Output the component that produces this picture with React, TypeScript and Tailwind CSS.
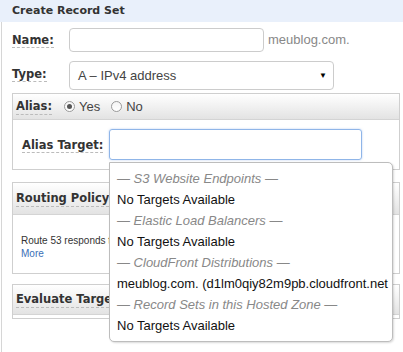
import { useState } from "react";

const labelCls =
  "font-['DejaVu_Sans',sans-serif] font-bold text-[11.5px] text-[#333] border-b border-dashed border-[#bbb] leading-[15px]";

function Panel({ title, children, headerH }: { title: React.ReactNode; children?: React.ReactNode; headerH: string }) {
  return (
    <div className="border border-[#cfcfcf]">
      <div className={`flex items-center gap-2 px-[3px] bg-gradient-to-b from-white to-[#e3e3e3] border-b border-[#d4d4d4] ${headerH}`}>
        {title}
      </div>
      {children}
    </div>
  );
}

const targets = [
  { group: true, text: "— S3 Website Endpoints —" },
  { group: false, text: "No Targets Available" },
  { group: true, text: "— Elastic Load Balancers —" },
  { group: false, text: "No Targets Available" },
  { group: true, text: "— CloudFront Distributions —" },
  { group: false, text: "meublog.com. (d1lm0qiy82m9pb.cloudfront.net" },
  { group: true, text: "— Record Sets in this Hosted Zone —" },
  { group: false, text: "No Targets Available" },
];

export default function App() {
  const [alias, setAlias] = useState("yes");

  return (
    <div className="relative w-[403px] h-[352px] overflow-hidden bg-white font-['Liberation_Sans',Arial,sans-serif] text-[13px] text-[#222]">
      {/* Header */}
      <div className="h-[22px] bg-[#e9f0fb] flex items-center pl-[12px]">
        <span className="font-['DejaVu_Sans',sans-serif] font-bold text-[11px] text-[#333]">Create Record Set</span>
      </div>

      <div className="h-[330px] ml-[1px] border-l border-[#d6d6d6] pl-[10px] pr-[3px] pt-[6px]">
        {/* Name */}
        <div className="flex items-center h-[24px]">
          <div className="w-[57px]">
            <span className={labelCls}>Name:</span>
          </div>
          <div className="w-[195px] h-[24px] border border-[#ccc] rounded-[4px]" />
          <span className="ml-[4px] text-[#888] text-[13px]">meublog.com.</span>
        </div>

        {/* Type */}
        <div className="flex items-center h-[29px] mt-[9px]">
          <div className="w-[57px] -mt-[4px]">
            <span className={labelCls}>Type:</span>
          </div>
          <div className="w-[265px] h-[29px] border border-[#ccc] rounded-[4px] flex items-center pl-[8px] pr-[6px]">
            <span className="flex-1 text-[#444]">A – IPv4 address</span>
            <span className="text-[8px] text-black">▼</span>
          </div>
        </div>

        {/* Alias panel */}
        <div className="mt-[3px]">
          <Panel
            headerH="h-[26px]"
            title={
              <div className="flex items-center">
                <span className={labelCls}>Alias:</span>
                <label className="flex items-center ml-[12px] cursor-pointer" onClick={() => setAlias("yes")}>
                  <span className="w-[11px] h-[11px] rounded-full border border-[#9a9a9a] bg-gradient-to-b from-[#f4f4f4] to-white flex items-center justify-center">
                    {alias === "yes" && <span className="w-[5px] h-[5px] rounded-full bg-[#555]" />}
                  </span>
                  <span className="ml-[4px] text-[13px] text-[#444]">Yes</span>
                </label>
                <label className="flex items-center ml-[11px] cursor-pointer" onClick={() => setAlias("no")}>
                  <span className="w-[11px] h-[11px] rounded-full border border-[#9a9a9a] bg-gradient-to-b from-[#f4f4f4] to-white flex items-center justify-center">
                    {alias === "no" && <span className="w-[5px] h-[5px] rounded-full bg-[#555]" />}
                  </span>
                  <span className="ml-[4px] text-[13px] text-[#444]">No</span>
                </label>
              </div>
            }
          >
            <div className="flex items-center h-[49px] pl-[9px]">
              <div className="w-[87px]">
                <span className={labelCls}>Alias Target:</span>
              </div>
              <div className="w-[253px] h-[31px] border border-[#8fb5e8] rounded-[3px] shadow-[0_0_2px_rgba(100,150,230,0.5)]" />
            </div>
          </Panel>
        </div>

        {/* Routing policy */}
        <div className="mt-[12px]">
          <Panel headerH="h-[32px]" title={<span className={labelCls}>Routing Policy:</span>}>
            <div className="h-[58px] pl-[8px] pt-[19px] text-[10px] leading-[13px] text-[#333]">
              <div>Route 53 responds to queries based on the routing policy</div>
              <div className="text-[#3a6fb7]">More</div>
            </div>
          </Panel>
        </div>

        {/* Evaluate target health */}
        <div className="mt-[10px]">
          <Panel headerH="h-[30px]" title={<span className={labelCls}>Evaluate Target Health:</span>}>
            <div className="h-[3px]" />
          </Panel>
        </div>
      </div>

      {/* Alias target dropdown */}
      <div className="absolute left-[109px] top-[162px] w-[284px] h-[180px] bg-white border border-[#bdbdbd] rounded-b-[5px] rounded-tr-[5px] shadow-[1px_1px_2px_rgba(0,0,0,0.15)] pt-[5px] overflow-hidden">
        {targets.map((t, i) => (
          <div
            key={i}
            className={`h-[21px] pl-[7px] flex items-center whitespace-nowrap ${
              t.group ? "italic text-[#888]" : "text-[#111]"
            }`}
          >
            {t.text}
          </div>
        ))}
      </div>
    </div>
  );
}
